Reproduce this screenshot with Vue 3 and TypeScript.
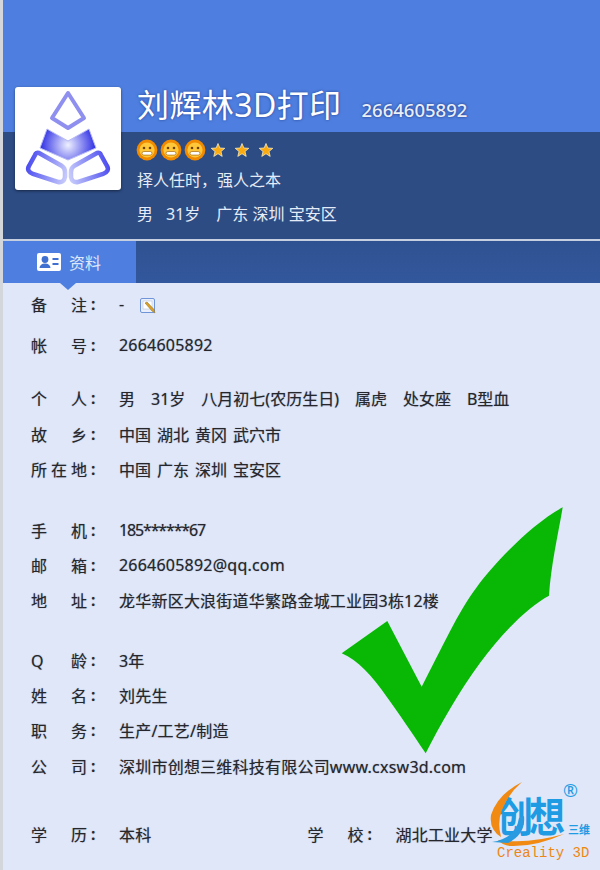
<script setup lang="ts">
interface Cell { label: string; parts: string[]; tight?: boolean; note?: boolean; masked?: boolean }
interface Row { cells: Cell[]; gap: number }

const rows: Row[] = [
  { gap: 0, cells: [{ label: '备注', parts: ['-'], note: true }] },
  { gap: 6, cells: [{ label: '帐号', parts: ['2664605892'] }] },
  { gap: 18, cells: [{ label: '个人', parts: ['男', '31岁', '八月初七(农历生日)', '属虎', '处女座', 'B型血'] }] },
  { gap: 1, cells: [{ label: '故乡', parts: ['中国', '湖北', '黄冈', '武穴市'], tight: true }] },
  { gap: 0, cells: [{ label: '所在地', parts: ['中国', '广东', '深圳', '宝安区'], tight: true }] },
  { gap: 26, cells: [{ label: '手机', parts: ['185******67'], masked: true }] },
  { gap: 0, cells: [{ label: '邮箱', parts: ['2664605892@qq.com'] }] },
  { gap: 0, cells: [{ label: '地址', parts: ['龙华新区大浪街道华繁路金城工业园3栋12楼'] }] },
  { gap: 25, cells: [{ label: 'Q龄', parts: ['3年'] }] },
  { gap: 0, cells: [{ label: '姓名', parts: ['刘先生'] }] },
  { gap: 0, cells: [{ label: '职务', parts: ['生产/工艺/制造'] }] },
  { gap: 1, cells: [{ label: '公司', parts: ['深圳市创想三维科技有限公司www.cxsw3d.com'] }] },
  { gap: 33, cells: [{ label: '学历', parts: ['本科'] }, { label: '学校', parts: ['湖北工业大学'] }] }
];

const stars = [0, 1, 2];
</script>

<template>
  <div class="card">
    <header class="head">
      <div class="head-top"></div>
      <div class="head-bottom"></div>
      <div class="head-content">
        <div class="avatar">
          <svg width="106" height="103" viewBox="15 87 106 103">
            <defs>
              <radialGradient id="lg" gradientUnits="userSpaceOnUse" cx="68" cy="145" r="28">
                <stop offset="0" stop-color="#eef0ff" />
                <stop offset="1" stop-color="#2c2ce4" />
              </radialGradient>
              <linearGradient id="ll" gradientUnits="userSpaceOnUse" x1="26" y1="165" x2="66" y2="175">
                <stop offset="0" stop-color="#4a4af0" />
                <stop offset="1" stop-color="#c4c8fa" />
              </linearGradient>
              <linearGradient id="lr" gradientUnits="userSpaceOnUse" x1="110" y1="165" x2="70" y2="175">
                <stop offset="0" stop-color="#4a4af0" />
                <stop offset="1" stop-color="#c4c8fa" />
              </linearGradient>
            </defs>
            <path d="M68 93 L84 118 L68 128 L52 118 Z" fill="#fff" stroke="#8f8ff0" stroke-width="4" stroke-linejoin="round" />
            <path d="M47 129 L68 141 L89 129 L96 148 L68 160 L40 148 Z" fill="url(#lg)" stroke="#b7baf6" stroke-width="1" />
            <path d="M39 153 L62 166 Q65 168 65 172 L65 177 Q64 183 58 182 L33 174 Q26 171 29 166 L35 155 Q36 152 39 153 Z" fill="#fff" stroke="url(#ll)" stroke-width="4.5" />
            <path d="M97 153 L74 166 Q71 168 71 172 L71 177 Q72 183 78 182 L103 174 Q110 171 107 166 L101 155 Q100 152 97 153 Z" fill="#fff" stroke="url(#lr)" stroke-width="4.5" />
          </svg>
        </div>
        <div class="head-info">
          <div class="title-line">
            <h1 class="nick">刘辉林3D打印</h1>
            <span class="uid">2664605892</span>
          </div>
          <div class="level">
            <svg v-for="s in stars" :key="'sun' + s" class="sun" width="22" height="22" viewBox="0 0 22 22">
              <circle cx="11" cy="11" r="10.4" fill="#f08a00" />
              <circle cx="11" cy="11" r="7.6" fill="#ffc83a" />
              <circle cx="8" cy="9" r="1.3" fill="#6e4206" />
              <circle cx="14" cy="9" r="1.3" fill="#6e4206" />
              <rect x="6" y="12.5" width="10" height="3.6" rx="1.8" fill="#fff" stroke="#a86a10" stroke-width=".7" />
            </svg>
            <svg v-for="s in stars" :key="'star' + s" class="star" width="16" height="16" viewBox="0 0 16 16">
              <path d="M8 1.5 L9.9 6 L14.8 6.3 L11 9.5 L12.2 14.4 L8 11.7 L3.8 14.4 L5 9.5 L1.2 6.3 L6.1 6 Z" fill="#fbab10" stroke="#fff6cc" stroke-width=".7" />
            </svg>
          </div>
          <p class="motto">择人任时，强人之本</p>
          <p class="meta"><span>男</span><span>31岁</span><span class="place">广东 深圳 宝安区</span></p>
        </div>
      </div>
    </header>

    <nav class="tabs">
      <div class="tab">
        <svg width="24" height="18" viewBox="0 0 24 18">
          <rect width="24" height="18" rx="2" fill="#fff" />
          <circle cx="8" cy="6.5" r="3.4" fill="#3f6fd0" />
          <path d="M2.5 15 Q3 10.5 8 10.5 Q13 10.5 13.5 15 Z" fill="#3f6fd0" />
          <rect x="15.5" y="5" width="6" height="2" fill="#3f6fd0" />
          <rect x="15.5" y="10" width="6" height="2" fill="#3f6fd0" />
        </svg>
        <span>资料</span>
      </div>
    </nav>

    <main class="body">
      <div v-for="(row, i) in rows" :key="i" class="row" :style="{ marginTop: row.gap + 'px' }">
        <div v-for="cell in row.cells" :key="cell.label" class="cell">
          <span class="label">{{ cell.label }}</span>
          <span class="colon">:</span>
          <span class="value" :class="{ tight: cell.tight, wide: cell.parts.length === 1, masked: cell.masked }">
            <span v-for="p in cell.parts" :key="p">{{ p }}</span>
            <svg v-if="cell.note" class="note" width="16" height="16" viewBox="0 0 16 16">
              <rect x=".5" y=".5" width="14" height="14" rx="1.5" fill="#e8eefb" stroke="#6f94d8" />
              <rect x="3" y="3" width="9" height="8" fill="#fff" stroke="#b9c6dd" stroke-width=".6" />
              <path d="M5 5 L12 13 L15 15 L14 11.5 L7 4 Z" fill="#e0a020" stroke="#7a6a30" stroke-width=".5" />
            </svg>
          </span>
        </div>
      </div>
    </main>

    <svg class="check" width="240" height="260" viewBox="335 500 240 260">
      <path d="M421.7 686.7 C442 648 458 612 476.7 587.3 C492 566 530 525 562.7 507.3 C558 535 551 565 549 595.7 C530 606 504 630 480 663 C460 690 440 725 425.7 753.3 C412 733 398 712 386.7 696.7 C372 676 358 660 341.7 653.3 L387.3 621 Z" fill="#08b804" />
    </svg>

    <div class="brand">
      <span class="brand-cn">创想</span>
      <svg class="swoosh" width="100" height="70" viewBox="0 0 100 70">
        <path d="M32 2 Q8 14 1 35 Q-1 50 11 57 Q7 42 12 30 Q18 14 32 2 Z" fill="#f08a12" />
        <path d="M8 60 Q40 64 74 54 Q46 67 20 66 Q12 65 8 60 Z" fill="#f08a12" />
        <path d="M34 36 Q36 54 18 63 L2 62 Q26 58 29 38 Z" fill="#2a9be0" />
      </svg>
      <span class="brand-r">®</span>
      <span class="brand-sub">三维</span>
      <span class="brand-en">Creality 3D</span>
    </div>
  </div>
</template>

<style>
html, body { margin: 0; background: #dfe7f9; }
</style>

<style scoped>
.card {
  position: relative;
  width: 600px;
  height: 870px;
  overflow: hidden;
  box-sizing: border-box;
  border-left: 3px solid #d3d6da;
  background: #dfe7f9;
  font-family: "Noto Sans", "Noto Sans CJK SC", sans-serif;
  color: #26272c;
}

/* --- Header --- */
.head {
  position: relative;
  height: 239px;
  display: flex;
  flex-direction: column;
}
.head-top { height: 132px; background: #4e7fe0; }
.head-bottom { flex: 1; background: #2d4c84; }
.head-content {
  position: absolute;
  top: 82px;
  left: 12px;
  display: flex;
  gap: 16px;
  color: #fff;
}
.avatar {
  width: 106px;
  height: 103px;
  margin-top: 5px;
  background: #fff;
  border-radius: 3px;
  box-shadow: 0 1px 3px rgba(0, 0, 0, .5);
}
.avatar svg { display: block; }
.title-line { display: flex; align-items: baseline; gap: 20px; height: 48px; }
.nick {
  margin: 0;
  font-size: 32px;
  font-weight: 400;
  letter-spacing: .4px;
  line-height: 46px;
  text-shadow: 0 0 3px rgba(20, 40, 110, .7);
}
.uid {
  font-size: 18.5px;
  font-weight: 500;
  color: #e9eef8;
  text-shadow: 0 0 3px rgba(20, 40, 110, .9);
}
.level { display: flex; align-items: center; height: 22px; margin: 9px 0 0 -1px; gap: 2px; }
.star { margin-left: 6px; }
.sun + .star { margin-left: 2px; }
.motto {
  margin: 7px 0 0;
  font-size: 16px;
  line-height: 24px;
  color: #e6ecf7;
}
.meta {
  display: flex;
  gap: 13px;
  margin: 10px 0 0;
  font-size: 16px;
  line-height: 24px;
  color: #e6ecf7;
}
.meta .place { margin-left: 3px; }

/* --- Tabs --- */
.tabs {
  height: 42px;
  margin-top: 2px;
  background: linear-gradient(#2e5291, #33579c);
  box-shadow: 0 -2px 0 #c6cfe0;
}
.tab {
  position: relative;
  width: 133px;
  height: 42px;
  box-sizing: border-box;
  padding-left: 34px;
  display: flex;
  align-items: center;
  gap: 8px;
  background: #4e7fe0;
  color: #dfe8fa;
  font-size: 16px;
}
.tab::after {
  content: "";
  position: absolute;
  left: 57px;
  bottom: -7px;
  border: 8px solid transparent;
  border-bottom: 0;
  border-top: 7px solid #4e7fe0;
}

/* --- Rows --- */
.body { padding: 3px 0 0 28px; }
.row {
  display: flex;
  height: 35px;
  align-items: center;
  font-size: 16px;
  text-shadow: 0 0 1px rgba(40, 40, 60, .5);
}
.cell { display: flex; align-items: center; }
.cell + .cell { margin-left: 156px; }
.label {
  width: 56px;
  text-align: justify;
  text-align-last: justify;
  white-space: nowrap;
}
.colon { width: 32px; padding-left: 4px; box-sizing: border-box; font-weight: 600; }
.value { display: flex; align-items: center; gap: 16px; white-space: nowrap; }
.value.tight { gap: 6px; }
.value.wide { letter-spacing: .22px; }
.value.masked { letter-spacing: -1.15px; }
.note { margin-top: 5px; }

/* --- Overlays --- */
.check { position: absolute; left: 332px; top: 500px; }
.brand { position: absolute; left: 487px; top: 780px; width: 110px; height: 85px; }
.swoosh { position: absolute; left: 0; top: 0; }
.brand-cn {
  position: absolute;
  left: 7px;
  top: 12px;
  font-size: 36px;
  line-height: 50px;
  font-weight: 700;
  letter-spacing: -4px;
  color: #1f9be4;
  transform: scaleY(1.15);
}
.brand-r {
  position: absolute;
  left: 73px;
  top: 3px;
  font-size: 18px;
  line-height: 14px;
  color: #1f9be4;
}
.brand-sub { position: absolute; left: 78px; top: 43px; font-size: 11px; line-height: 14px; font-weight: 700; color: #1f9be4; }
.brand-en {
  position: absolute;
  left: 7px;
  top: 65px;
  font-family: "Liberation Mono", monospace;
  font-size: 14px;
  color: #ee8612;
}
</style>
